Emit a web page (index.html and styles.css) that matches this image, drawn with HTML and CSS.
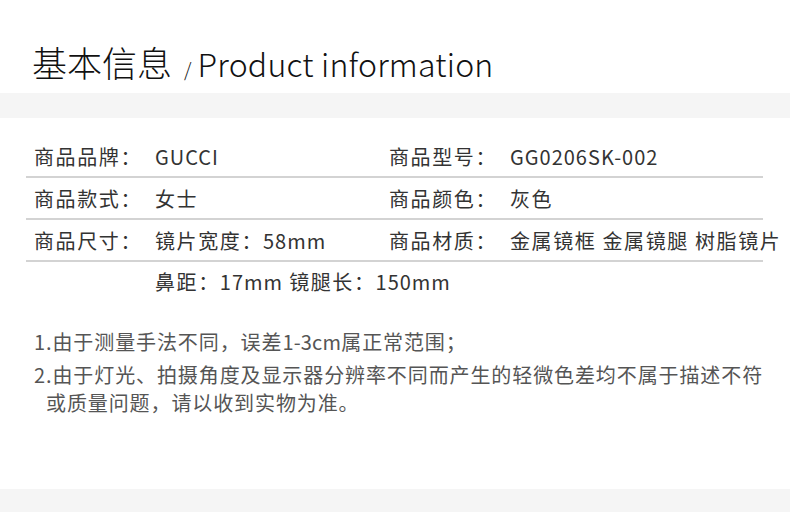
FILE: index.html
```html
<!DOCTYPE html>
<html lang="zh-CN">
<head>
<meta charset="utf-8">
<title>基本信息</title>
<link rel="stylesheet" href="styles.css">
</head>
<body>
<div class="page">
  <header class="head">
    <h1 class="title"><span class="title-cn">基本信息</span><span class="slash">/</span><span class="title-en">Product information</span></h1>
  </header>
  <div class="band"></div>
  <section class="spec">
    <div class="row">
      <span class="label">商品品牌：</span><span class="value latin">GUCCI</span>
      <span class="label">商品型号：</span><span class="value latin">GG0206SK-002</span>
    </div>
    <div class="row">
      <span class="label">商品款式：</span><span class="value">女士</span>
      <span class="label">商品颜色：</span><span class="value">灰色</span>
    </div>
    <div class="row">
      <span class="label">商品尺寸：</span><span class="value">镜片宽度：<span class="latin">58mm</span></span>
      <span class="label">商品材质：</span><span class="value">金属镜框 金属镜腿 树脂镜片</span>
    </div>
    <div class="row row-last">
      <span class="label"></span><span class="value value-wide">鼻距：<span class="latin">17mm</span> 镜腿长：<span class="latin">150mm</span></span>
    </div>
  </section>
  <section class="notes">
    <p class="note">1.由于测量手法不同，误差<span class="latin-note">1-3cm</span>属正常范围；</p>
    <p class="note">2.由于灯光、拍摄角度及显示器分辨率不同而产生的轻微色差均不属于描述不符<br><span class="indent">或质量问题，请以收到实物为准。</span></p>
  </section>
  <div class="band band-bottom"></div>
</div>
</body>
</html>
```
FILE: styles.css
```css
html, body {
  margin: 0;
  padding: 0;
  background: #ffffff;
}
body {
  font-family: "Noto Sans CJK SC", "Noto Sans", sans-serif;
  color: #333333;
  overflow: hidden;
}
.page {
  width: 790px;
  height: 512px;
  display: flex;
  flex-direction: column;
}
.head {
  height: 93px;
  display: flex;
  align-items: flex-end;
  padding-left: 32px;
  box-sizing: border-box;
}
.title {
  margin: 0 0 14px 0;
  font-weight: 300;
  line-height: 1;
  color: #111111;
  display: flex;
  align-items: baseline;
}
.title-cn {
  font-size: 35px;
}
.slash {
  font-size: 19px;
  margin: 0 6px 0 12px;
}
.title-en {
  font-size: 32px;
  font-weight: 300;
  letter-spacing: 0.2px;
}
.band {
  height: 25px;
  background: #f5f5f5;
  flex: none;
}
.spec {
  margin: 18px 27px 0 26px;
}
.row {
  display: grid;
  grid-template-columns: 121px 234px 121px 1fr;
  align-items: center;
  height: 40px;
  padding-left: 8px;
  border-bottom: 2px solid #d3d3d3;
  font-size: 20px;
  letter-spacing: 1.6px;
  color: #333333;
  white-space: nowrap;
}
.latin {
  letter-spacing: 1px;
}
.row-last {
  border-bottom: none;
  height: 38px;
}
.value-wide {
  grid-column: 2 / 5;
}
.notes {
  margin: 28px 0 0 34px;
  font-size: 20px;
  letter-spacing: 0.9px;
  color: #555555;
}
.latin-note {
  letter-spacing: 0.2px;
}
.note {
  margin: 0 0 5px 0;
  line-height: 28px;
  white-space: nowrap;
}
.indent {
  padding-left: 12px;
}
.band-bottom {
  margin-top: auto;
  height: 23px;
}
```
